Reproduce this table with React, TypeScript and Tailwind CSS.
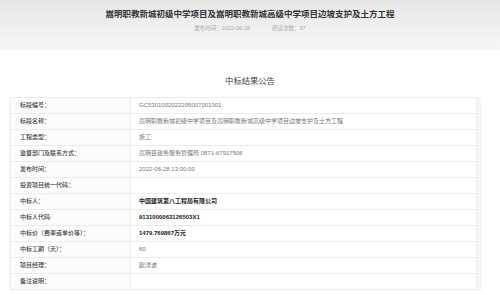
const rows: { label: string; value: string; strong?: boolean }[] = [
  { label: "标段编号：", value: "GC5301002022205007001001" },
  { label: "标段名称：", value: "嵩明职教新城初级中学项目及嵩明职教新城高级中学项目边坡支护及土方工程" },
  { label: "工程类型：", value: "施工" },
  { label: "监督部门及联系方式：", value: "嵩明县政务服务管理局 0871-67917506" },
  { label: "发布时间：", value: "2022-06-28 13:00:00" },
  { label: "投资项目统一代码：", value: "" },
  { label: "中标人：", value: "中国建筑第八工程局有限公司", strong: true },
  { label: "中标人代码:", value: "9131000063126503X1", strong: true },
  { label: "中标价（费率或单价等）：", value: "1479.769867万元", strong: true },
  { label: "中标工期（天）：", value: "60" },
  { label: "项目经理：", value: "欧洋波" },
  { label: "备注说明：", value: "" },
];

export default function App() {
  return (
    <div className="w-[500px] h-[295px] overflow-hidden bg-white font-['Liberation_Sans','Noto_Sans_CJK_SC',sans-serif]">
      <div className="h-[50px] bg-gradient-to-b from-[#e6e6e6] to-[#f7f7f7] flex flex-col items-center pt-[8px]">
        <h1 className="text-[8.5px] leading-[12px] font-bold text-[#333]">
          嵩明职教新城初级中学项目及嵩明职教新城高级中学项目边坡支护及土方工程
        </h1>
        <div className="mt-[4px] flex gap-[22px] text-[5.5px] leading-[8px] text-[#aaa]">
          <span>发布时间：2022-06-28</span>
          <span>阅读次数：37</span>
        </div>
      </div>
      <div className="flex flex-col items-center pt-[25px]">
        <h2 className="text-[8.3px] leading-[12px] text-[#444]">中标结果公告</h2>
      </div>
      <div className="mt-[10px] ml-[10px] w-[472px] border-r-[5px] border-[#f6f6f6]">
        <div className="border-t border-l border-r border-[#ececec]">
          {rows.map((r) => (
            <div key={r.label} className="flex h-[16px] border-b border-[#ececec] text-[6px] leading-[15px]">
              <div className="w-[120px] shrink-0 pl-[9px] border-r border-[#ececec] bg-[#fcfcfc] text-[#444] font-medium">
                {r.label}
              </div>
              <div className={"pl-[8px] " + (r.strong ? "font-bold text-[#222]" : "text-[#777]")}>
                {r.value}
              </div>
            </div>
          ))}
        </div>
      </div>
    </div>
  );
}
